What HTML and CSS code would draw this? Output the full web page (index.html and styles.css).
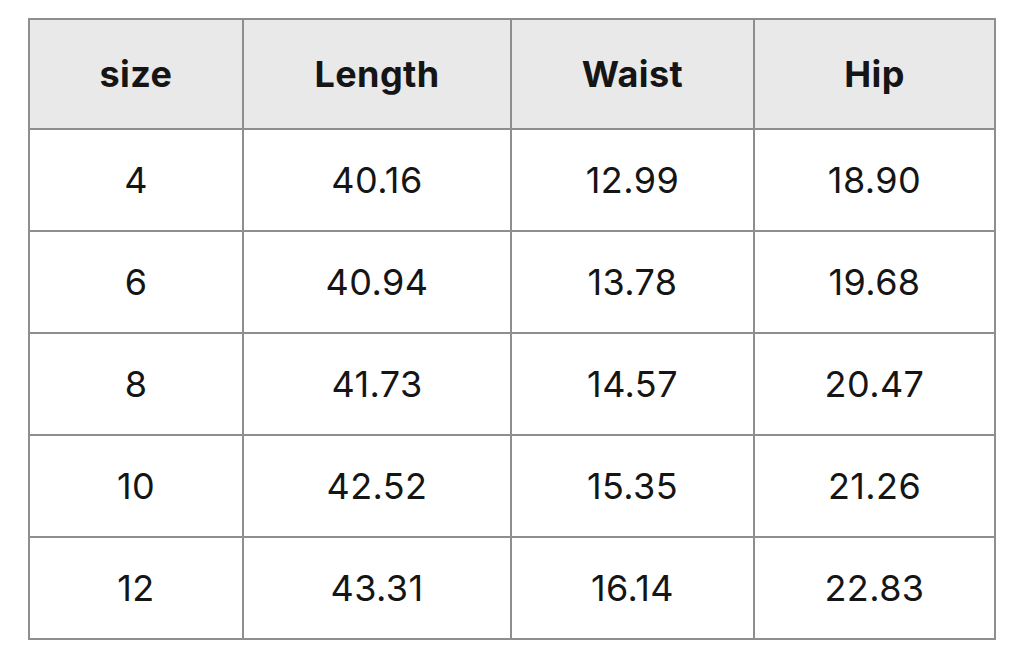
FILE: index.html
```html
<!DOCTYPE html>
<html>
<head>
<meta charset="utf-8">
<link rel="stylesheet" href="styles.css">
</head>
<body>
<table class="size-table">
  <colgroup>
    <col class="c1"><col class="c2"><col class="c3"><col class="c4">
  </colgroup>
  <thead>
    <tr><th>size</th><th>Length</th><th>Waist</th><th>Hip</th></tr>
  </thead>
  <tbody>
    <tr><td>4</td><td>40.16</td><td>12.99</td><td>18.90</td></tr>
    <tr><td>6</td><td>40.94</td><td>13.78</td><td>19.68</td></tr>
    <tr><td>8</td><td>41.73</td><td>14.57</td><td>20.47</td></tr>
    <tr><td>10</td><td>42.52</td><td>15.35</td><td>21.26</td></tr>
    <tr><td>12</td><td>43.31</td><td>16.14</td><td>22.83</td></tr>
  </tbody>
</table>
</body>
</html>
```

FILE: styles.css
```css
html, body {
  margin: 0;
  padding: 0;
  background: #ffffff;
}
body {
  padding: 18px 0 0 28px;
  font-family: Inter, "Liberation Sans", sans-serif;
  color: #151515;
}
.size-table {
  border-collapse: collapse;
  table-layout: fixed;
  width: 966px;
}
.c1 { width: 214px; }
.c2 { width: 268px; }
.c3 { width: 243px; }
.c4 { width: 241px; }
.size-table th,
.size-table td {
  border: 2px solid #8e8e8e;
  text-align: center;
  vertical-align: middle;
  padding: 0;
  font-size: 36px;
  line-height: 1;
  letter-spacing: 0.4px;
}
.size-table th {
  background: #e9e9e9;
  font-weight: 700;
  height: 108px;
}
.size-table td {
  font-weight: 400;
  height: 100px;
}
```
